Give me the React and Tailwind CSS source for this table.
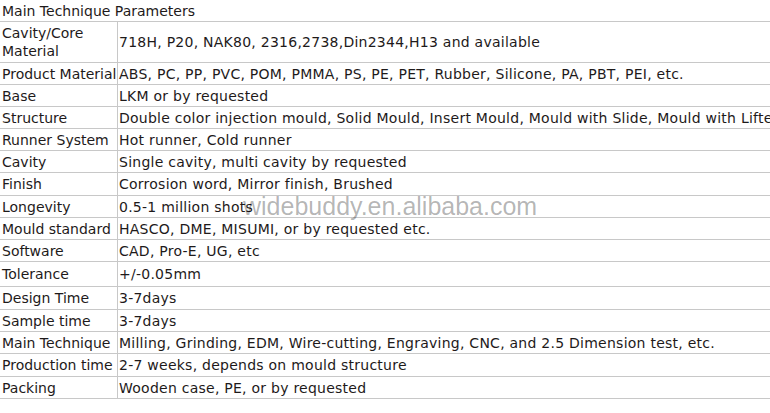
const rows = [
  { label: 'Cavity/Core Material', value: '718H, P20, NAK80, 2316,2738,Din2344,H13 and available', h: 'h-[41px]' },
  { label: 'Product Material', value: 'ABS, PC, PP, PVC, POM, PMMA, PS, PE, PET, Rubber, Silicone, PA, PBT, PEI, etc.', h: 'h-[22px]' },
  { label: 'Base', value: 'LKM or by requested', h: 'h-[22px]' },
  { label: 'Structure', value: 'Double color injection mould, Solid Mould, Insert Mould, Mould with Slide, Mould with Lifter', h: 'h-[22px]' },
  { label: 'Runner System', value: 'Hot runner, Cold runner', h: 'h-[22px]' },
  { label: 'Cavity', value: 'Single cavity, multi cavity by requested', h: 'h-[22px]' },
  { label: 'Finish', value: 'Corrosion word, Mirror finish, Brushed', h: 'h-[23px]' },
  { label: 'Longevity', value: '0.5-1 million shots', h: 'h-[22px]' },
  { label: 'Mould standard', value: 'HASCO, DME, MISUMI, or by requested etc.', h: 'h-[22px]' },
  { label: 'Software', value: 'CAD, Pro-E, UG, etc', h: 'h-[22px]' },
  { label: 'Tolerance', value: '+/-0.05mm', h: 'h-[25px]' },
  { label: 'Design Time', value: '3-7days', h: 'h-[23px]' },
  { label: 'Sample time', value: '3-7days', h: 'h-[22px]' },
  { label: 'Main Technique', value: 'Milling, Grinding, EDM, Wire-cutting, Engraving, CNC, and 2.5 Dimension test, etc.', h: 'h-[22px]' },
  { label: 'Production time', value: '2-7 weeks, depends on mould structure', h: 'h-[23px]' },
  { label: 'Packing', value: 'Wooden case, PE, or by requested', h: 'h-[22px]' },
];

export default function App() {
  return (
    <div className="relative w-[770px] h-[413px] overflow-hidden bg-white text-[14px] leading-[16px] text-[#1e1a1a] font-['DejaVu_Sans',sans-serif]">
      <div className="w-[900px]">
        <div className="h-[22px] border-b border-[#c8c8c8] flex items-center pl-[2px] whitespace-nowrap">
          Main Technique Parameters
        </div>
        {rows.map((r) => (
          <div key={r.label} className={`${r.h} flex border-b border-[#c8c8c8]`}>
            <div className="w-[118px] shrink-0 border-r border-[#c8c8c8] flex items-center pl-[2px] leading-[18px]">
              {r.label === 'Cavity/Core Material' ? (
                <span>Cavity/Core<br />Material</span>
              ) : (
                <span className="whitespace-nowrap">{r.label}</span>
              )}
            </div>
            <div className="flex items-center pl-[1px] whitespace-nowrap tracking-[0.25px]">{r.value}</div>
          </div>
        ))}
      </div>
      {/* watermark */}
      <div className="absolute left-[243px] top-[194px] text-[25px] leading-[25px] text-black/30 font-['Liberation_Sans',Arial,sans-serif] whitespace-nowrap pointer-events-none">
        widebuddy.en.alibaba.com
      </div>
    </div>
  );
}
